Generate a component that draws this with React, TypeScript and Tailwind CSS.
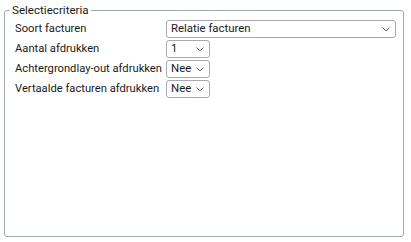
import React from "react";

function Chevron() {
  return (
    <svg width="8" height="5" viewBox="0 0 8 5" className="shrink-0">
      <path d="M0.5 0.5 L4 4 L7.5 0.5" fill="none" stroke="#6b6b6b" strokeWidth="1" />
    </svg>
  );
}

function Select({ value, wide }: { value: string; wide?: boolean }) {
  return (
    <div
      className={`h-[18px] border border-[#a9a9a9] rounded-[3px] bg-white flex items-center pl-[4px] pr-[5px] ${
        wide ? "w-[230px]" : "w-[44px]"
      }`}
    >
      <span className="flex-1 text-[11.4px] leading-none text-[#1a1a1a] whitespace-nowrap">{value}</span>
      <Chevron />
    </div>
  );
}

const rows: [string, string, boolean][] = [
  ["Soort facturen", "Relatie facturen", true],
  ["Aantal afdrukken", "1", false],
  ["Achtergrondlay-out afdrukken", "Nee", false],
  ["Vertaalde facturen afdrukken", "Nee", false],
];

export default function App() {
  return (
    <div
      className="w-[411px] h-[242px] bg-white pt-[3px] pl-[4px]"
      style={{ fontFamily: "Roboto, 'Noto Sans', sans-serif" }}
    >
      <fieldset className="w-[400px] h-[234px] border border-[#a3abb2] rounded-[3px] pl-[10px] pr-[6px] pt-[3px]">
        <legend className="ml-[-5px] px-[2px] text-[11.6px] leading-[14px] text-[#1a1a1a]">Selectiecriteria</legend>
        <div className="grid grid-cols-[151px_auto] gap-y-[2px] items-center">
          {rows.map(([label, value, wide]) => (
            <React.Fragment key={label}>
              <div className="text-[11.2px] leading-[18px] text-[#1a1a1a] whitespace-nowrap">{label}</div>
              <Select value={value} wide={wide} />
            </React.Fragment>
          ))}
        </div>
      </fieldset>
    </div>
  );
}
